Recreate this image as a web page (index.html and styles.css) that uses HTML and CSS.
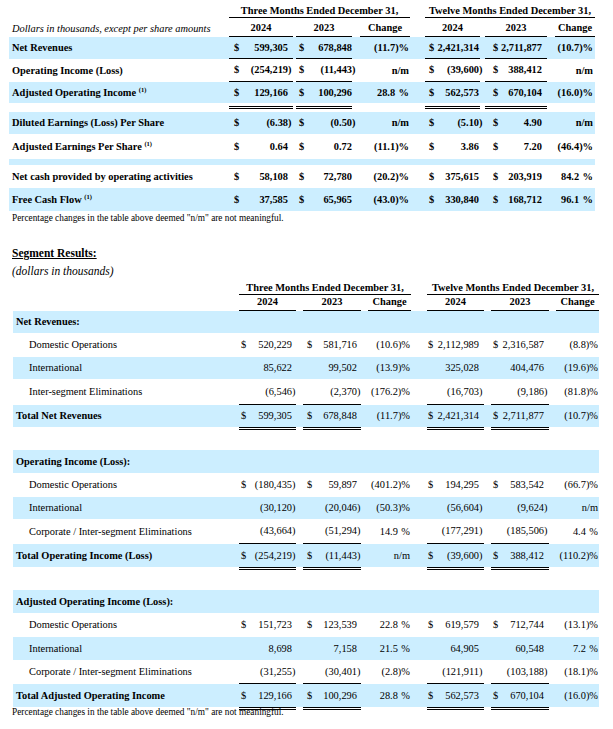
FILE: index.html
```html
<!DOCTYPE html>
<html>
<head>
<meta charset="utf-8">
<link rel="stylesheet" href="styles.css">
</head>
<body>
<div class="page">
<table class="fin t1">
<colgroup><col><col><col><col><col><col><col><col><col><col><col><col></colgroup>
<thead>
<tr class="h1"><td></td><td colspan="5" class="span">Three Months Ended December 31,</td><td></td><td colspan="5" class="span">Twelve Months Ended December 31,</td></tr>
<tr class="h2"><td class="lab it">Dollars in thousands, except per share amounts</td><td class="u">2024</td><td></td><td class="u">2023</td><td></td><td class="u">Change</td><td></td><td class="u">2024</td><td></td><td class="u">2023</td><td></td><td class="u">Change</td></tr>
</thead>
<tbody>
<tr class="b r22"><td class="lab">Net Revenues</td><td class="m ul"><span class="d">$</span>599,305</td><td></td><td class="m ul"><span class="d">$</span>678,848</td><td></td><td class="m">(11.7)%</td><td></td><td class="m ul"><span class="d">$</span>2,421,314</td><td></td><td class="m ul"><span class="d">$</span>2,711,877</td><td></td><td class="m">(10.7)%</td></tr>
<tr class="r23"><td class="lab">Operating Income (Loss)</td><td class="m ul"><span class="d">$</span>(254,219<span class="cp">)</span></td><td></td><td class="m ul"><span class="d">$</span>(11,443<span class="cp">)</span></td><td></td><td class="m">n/m</td><td></td><td class="m ul"><span class="d">$</span>(39,600<span class="cp">)</span></td><td></td><td class="m ul"><span class="d">$</span>388,412</td><td></td><td class="m">n/m</td></tr>
<tr class="b r21"><td class="lab">Adjusted Operating Income <sup class="fn">(1)</sup></td><td class="m"><span class="d">$</span>129,166</td><td></td><td class="m"><span class="d">$</span>100,296</td><td></td><td class="m">28.8<span class="hp">)</span>%</td><td></td><td class="m"><span class="d">$</span>562,573</td><td></td><td class="m"><span class="d">$</span>670,104</td><td></td><td class="m">(16.0)%</td></tr>
<tr class="sp9"><td></td><td><div class="dl dl-gap"></div></td><td></td><td><div class="dl dl-gap"></div></td><td></td><td></td><td></td><td><div class="dl dl-gap"></div></td><td></td><td><div class="dl dl-gap"></div></td><td></td><td></td></tr>
<tr class="b r22"><td class="lab">Diluted Earnings (Loss) Per Share</td><td class="m"><span class="d">$</span>(6.38<span class="cp">)</span></td><td></td><td class="m"><span class="d">$</span>(0.50<span class="cp">)</span></td><td></td><td class="m">n/m</td><td></td><td class="m"><span class="d">$</span>(5.10<span class="cp">)</span></td><td></td><td class="m"><span class="d">$</span>4.90</td><td></td><td class="m">n/m</td></tr>
<tr class="r25"><td class="lab">Adjusted Earnings Per Share <sup class="fn">(1)</sup></td><td class="m"><span class="d">$</span>0.64</td><td></td><td class="m"><span class="d">$</span>0.72</td><td></td><td class="m">(11.1)%</td><td></td><td class="m"><span class="d">$</span>3.86</td><td></td><td class="m"><span class="d">$</span>7.20</td><td></td><td class="m">(46.4)%</td></tr>
<tr class="b band"><td colspan="12"></td></tr>
<tr class="r23"><td class="lab">Net cash provided by operating activities</td><td class="m"><span class="d">$</span>58,108</td><td></td><td class="m"><span class="d">$</span>72,780</td><td></td><td class="m">(20.2)%</td><td></td><td class="m"><span class="d">$</span>375,615</td><td></td><td class="m"><span class="d">$</span>203,919</td><td></td><td class="m">84.2<span class="hp">)</span>%</td></tr>
<tr class="b r23"><td class="lab">Free Cash Flow <sup class="fn">(1)</sup></td><td class="m"><span class="d">$</span>37,585</td><td></td><td class="m"><span class="d">$</span>65,965</td><td></td><td class="m">(43.0)%</td><td></td><td class="m"><span class="d">$</span>330,840</td><td></td><td class="m"><span class="d">$</span>168,712</td><td></td><td class="m">96.1<span class="hp">)</span>%</td></tr>
</tbody>
</table>
<p class="note note-top">Percentage changes in the table above deemed "n/m" are not meaningful.</p>

<h2 class="seg-title">Segment Results:</h2>
<p class="seg-sub">(dollars in thousands)</p>

<table class="fin t2">
<colgroup><col><col><col><col><col><col><col><col><col><col><col><col></colgroup>
<thead>
<tr class="h1"><td></td><td colspan="5" class="span">Three Months Ended December 31,</td><td></td><td colspan="5" class="span">Twelve Months Ended December 31,</td></tr>
<tr class="h2"><td></td><td class="u">2024</td><td></td><td class="u">2023</td><td></td><td class="u">Change</td><td></td><td class="u">2024</td><td></td><td class="u">2023</td><td></td><td class="u">Change</td></tr>
</thead>
<tbody>
<tr class="b r22"><td class="lab bd" colspan="12">Net Revenues:</td></tr>
<tr class="r24"><td class="lab ind">Domestic Operations</td><td class="m"><span class="d">$</span>520,229</td><td></td><td class="m"><span class="d">$</span>581,716</td><td></td><td class="m">(10.6)%</td><td></td><td class="m"><span class="d">$</span>2,112,989</td><td></td><td class="m"><span class="d">$</span>2,316,587</td><td></td><td class="m">(8.8)%</td></tr>
<tr class="b r22"><td class="lab ind">International</td><td class="m">85,622</td><td></td><td class="m">99,502</td><td></td><td class="m">(13.9)%</td><td></td><td class="m">325,028</td><td></td><td class="m">404,476</td><td></td><td class="m">(19.6)%</td></tr>
<tr class="r26"><td class="lab ind">Inter-segment Eliminations</td><td class="m ul">(6,546<span class="cp">)</span></td><td></td><td class="m ul">(2,370<span class="cp">)</span></td><td></td><td class="m">(176.2)%</td><td></td><td class="m ul">(16,703<span class="cp">)</span></td><td></td><td class="m ul">(9,186<span class="cp">)</span></td><td></td><td class="m">(81.8)%</td></tr>
<tr class="b r22"><td class="lab bd">Total Net Revenues</td><td class="m"><span class="d">$</span>599,305</td><td></td><td class="m"><span class="d">$</span>678,848</td><td></td><td class="m">(11.7)%</td><td></td><td class="m"><span class="d">$</span>2,421,314</td><td></td><td class="m"><span class="d">$</span>2,711,877</td><td></td><td class="m">(10.7)%</td></tr>
<tr class="dbl"><td></td><td><div class="dl"></div></td><td></td><td><div class="dl"></div></td><td></td><td></td><td></td><td><div class="dl"></div></td><td></td><td><div class="dl"></div></td><td></td><td></td></tr>
<tr class="gap"><td colspan="12"></td></tr>

<tr class="b r23"><td class="lab bd" colspan="12">Operating Income (Loss):</td></tr>
<tr class="r24"><td class="lab ind">Domestic Operations</td><td class="m"><span class="d">$</span>(180,435<span class="cp">)</span></td><td></td><td class="m"><span class="d">$</span>59,897</td><td></td><td class="m">(401.2)%</td><td></td><td class="m"><span class="d">$</span>194,295</td><td></td><td class="m"><span class="d">$</span>583,542</td><td></td><td class="m">(66.7)%</td></tr>
<tr class="b r22"><td class="lab ind">International</td><td class="m">(30,120<span class="cp">)</span></td><td></td><td class="m">(20,046<span class="cp">)</span></td><td></td><td class="m">(50.3)%</td><td></td><td class="m">(56,604<span class="cp">)</span></td><td></td><td class="m">(9,624<span class="cp">)</span></td><td></td><td class="m">n/m</td></tr>
<tr class="r25"><td class="lab ind">Corporate / Inter-segment Eliminations</td><td class="m ul">(43,664<span class="cp">)</span></td><td></td><td class="m ul">(51,294<span class="cp">)</span></td><td></td><td class="m">14.9<span class="hp">)</span>%</td><td></td><td class="m ul">(177,291<span class="cp">)</span></td><td></td><td class="m ul">(185,506<span class="cp">)</span></td><td></td><td class="m">4.4<span class="hp">)</span>%</td></tr>
<tr class="b r23"><td class="lab bd">Total Operating Income (Loss)</td><td class="m"><span class="d">$</span>(254,219<span class="cp">)</span></td><td></td><td class="m"><span class="d">$</span>(11,443<span class="cp">)</span></td><td></td><td class="m">n/m</td><td></td><td class="m"><span class="d">$</span>(39,600<span class="cp">)</span></td><td></td><td class="m"><span class="d">$</span>388,412</td><td></td><td class="m">(110.2)%</td></tr>
<tr class="dbl"><td></td><td><div class="dl"></div></td><td></td><td><div class="dl"></div></td><td></td><td></td><td></td><td><div class="dl"></div></td><td></td><td><div class="dl"></div></td><td></td><td></td></tr>
<tr class="gap"><td colspan="12"></td></tr>

<tr class="b r23"><td class="lab bd" colspan="12">Adjusted Operating Income (Loss):</td></tr>
<tr class="r24"><td class="lab ind">Domestic Operations</td><td class="m"><span class="d">$</span>151,723</td><td></td><td class="m"><span class="d">$</span>123,539</td><td></td><td class="m">22.8<span class="hp">)</span>%</td><td></td><td class="m"><span class="d">$</span>619,579</td><td></td><td class="m"><span class="d">$</span>712,744</td><td></td><td class="m">(13.1)%</td></tr>
<tr class="b r23"><td class="lab ind">International</td><td class="m">8,698</td><td></td><td class="m">7,158</td><td></td><td class="m">21.5<span class="hp">)</span>%</td><td></td><td class="m">64,905</td><td></td><td class="m">60,548</td><td></td><td class="m">7.2<span class="hp">)</span>%</td></tr>
<tr class="r24"><td class="lab ind">Corporate / Inter-segment Eliminations</td><td class="m ul">(31,255<span class="cp">)</span></td><td></td><td class="m ul">(30,401<span class="cp">)</span></td><td></td><td class="m">(2.8)%</td><td></td><td class="m ul">(121,911<span class="cp">)</span></td><td></td><td class="m ul">(103,188<span class="cp">)</span></td><td></td><td class="m">(18.1)%</td></tr>
<tr class="b r23"><td class="lab bd">Total Adjusted Operating Income</td><td class="m"><span class="d">$</span>129,166</td><td></td><td class="m"><span class="d">$</span>100,296</td><td></td><td class="m">28.8<span class="hp">)</span>%</td><td></td><td class="m"><span class="d">$</span>562,573</td><td></td><td class="m"><span class="d">$</span>670,104</td><td></td><td class="m">(16.0)%</td></tr>
<tr class="dbl"><td></td><td><div class="dl"></div></td><td></td><td><div class="dl"></div></td><td></td><td></td><td></td><td><div class="dl"></div></td><td></td><td><div class="dl"></div></td><td></td><td></td></tr>
</tbody>
</table>
<p class="note note-bottom">Percentage changes in the table above deemed "n/m" are not meaningful.</p>
</div>
</body>
</html>
```

FILE: styles.css
```css
* { box-sizing: border-box; }
body {
  margin: 0;
  background: #ffffff;
  color: #000000;
  font-family: "Liberation Serif", "Times New Roman", serif;
}
.page {
  width: 613px;
  padding-left: 9px;
}
.fin {
  border-collapse: separate;
  border-spacing: 0;
  table-layout: fixed;
  font-size: 10.4px;
  line-height: 12px;
  width: 586px;
}
.fin td {
  padding: 0;
  white-space: nowrap;
  vertical-align: middle;
}
.t1 { font-weight: bold; }
.t2 { margin-left: 4px; }

/* column widths */
.t1 col:nth-child(1) { width: 220px; }
.t1 col:nth-child(2) { width: 64px; }
.t1 col:nth-child(3) { width: 3px; }
.t1 col:nth-child(4) { width: 56px; }
.t1 col:nth-child(5) { width: 8px; }
.t1 col:nth-child(6) { width: 50px; }
.t1 col:nth-child(7) { width: 15px; }
.t1 col:nth-child(8) { width: 55px; }
.t1 col:nth-child(9) { width: 5px; }
.t1 col:nth-child(10) { width: 62px; }
.t1 col:nth-child(11) { width: 8px; }
.t1 col:nth-child(12) { width: 40px; }

.t2 col:nth-child(1) { width: 226px; }
.t2 col:nth-child(2) { width: 57px; }
.t2 col:nth-child(3) { width: 7px; }
.t2 col:nth-child(4) { width: 58px; }
.t2 col:nth-child(5) { width: 7px; }
.t2 col:nth-child(6) { width: 43px; }
.t2 col:nth-child(7) { width: 16px; }
.t2 col:nth-child(8) { width: 57px; }
.t2 col:nth-child(9) { width: 7px; }
.t2 col:nth-child(10) { width: 58px; }
.t2 col:nth-child(11) { width: 7px; }
.t2 col:nth-child(12) { width: 43px; }

/* header rows */
.h1 td, .h2 td { vertical-align: bottom; font-weight: bold; text-align: center; }
.t1 .h1 { height: 18px; }
.t1 .h2 { height: 19px; }
.t2 .h1 { height: 17px; }
.t2 .h2 { height: 16px; }
.span { border-bottom: 1px solid #000; }
.h2 td { padding-bottom: 2px; }
.u { border-bottom: 1px solid #000; }
.h2 td.it { font-style: italic; font-weight: normal; text-align: left; }

/* body rows */
.b { background: #cceeff; }
.r21 { height: 21px; }
.r22 { height: 22px; }
.r23 { height: 23px; }
.r24 { height: 24px; }
.r25 { height: 25px; }
.r26 { height: 26px; }
.band { height: 6px; }
.gap { height: 20px; }
.sp9 { height: 9px; }
.sp9 td { vertical-align: top; }
.dbl { height: 3px; }
.dbl td { vertical-align: top; }

.lab { text-align: left; padding-left: 3px !important; }
.ind { padding-left: 16px !important; }
.bd { font-weight: bold; }

.m { text-align: right; }
.d { float: left; }
.cp { margin-right: -0.34em; }
.hp { visibility: hidden; }
.ul { border-bottom: 1px solid #000; }

.dl { border-top: 3px double #000; height: 3px; }
.dl-gap { margin-top: 3px; }

.fn {
  font-size: 6.5px;
  line-height: 0;
  vertical-align: 4px;
}

/* value column padding: top table */
.t1 td.m:nth-child(2) { padding: 0 5px 0 5px; }
.t1 td.m:nth-child(4) { padding: 0 0 0 3px; }
.t1 td.m:nth-child(6) { padding: 0 1px 0 0; }
.t1 td.m:nth-child(8) { padding: 0 1px 0 4px; }
.t1 td.m:nth-child(10) { padding: 0 5px 0 8px; }
.t1 td.m:nth-child(12) { padding: 0 2px 0 0; }

/* value column padding: segment table */
.t2 td.m:nth-child(2) { padding: 0 4px 0 2px; }
.t2 td.m:nth-child(4) { padding: 0 4px 0 4px; }
.t2 td.m:nth-child(6) { padding: 0 1px 0 0; }
.t2 td.m:nth-child(8) { padding: 0 5px 0 1px; }
.t2 td.m:nth-child(10) { padding: 0 5px 0 2px; }
.t2 td.m:nth-child(12) { padding: 0 1px 0 0; }

/* notes and headings */
.note {
  margin: 0;
  padding-left: 3px;
  font-size: 9.3px;
  line-height: 12px;
}
.note-top { margin-top: 1px; }
.note-bottom { margin-top: -4px; }
.seg-title {
  margin: 22px 0 0 0;
  padding-left: 3px;
  font-size: 11.5px;
  line-height: 14px;
  font-weight: bold;
  text-decoration: underline;
}
.seg-sub {
  margin: 4px 0 0 0;
  padding-left: 3px;
  font-size: 11.5px;
  line-height: 14px;
  font-style: italic;
}
```
